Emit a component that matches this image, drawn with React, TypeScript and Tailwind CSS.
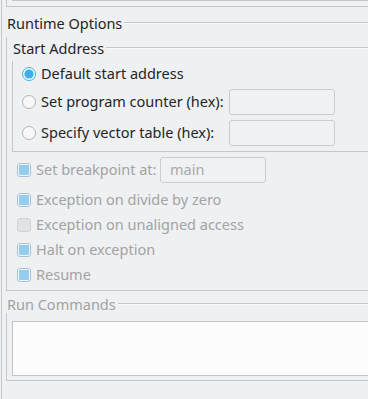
import React from "react";

const LINE = "border-[#c5c6c7]";

function Legend({ title, disabled }: { title: string; disabled?: boolean }) {
  return (
    <div className="flex h-[20px] items-center">
      <span
        className={
          "mt-[2px] pl-px text-[14.5px] leading-none " +
          (disabled ? "text-[#a2a3a5]" : "text-[#232627]")
        }
      >
        {title}
      </span>
      <div className="ml-[2px] mt-[2px] h-[2px] flex-1 border-t border-[#c5c6c7] bg-[#fafafa]" />
    </div>
  );
}

function Radio({ checked }: { checked?: boolean }) {
  return (
    <svg width="14" height="14" viewBox="0 0 14 14" className="shrink-0">
      <circle
        cx="7"
        cy="7"
        r="6.5"
        fill={checked ? "#f4fafd" : "#f7f7f8"}
        stroke={checked ? "#3daee9" : "#b3b4b6"}
        strokeWidth="1"
      />
      {checked && <circle cx="7" cy="7" r="4.6" fill="#3daee9" />}
    </svg>
  );
}

function Check({ checked }: { checked?: boolean }) {
  if (!checked) {
    return (
      <div className="h-[14px] w-[14px] shrink-0 rounded-[3px] border border-[#d2d3d4] bg-[#e1e2e3]" />
    );
  }
  return (
    <div className="h-[14px] w-[14px] shrink-0 rounded-[3px] border border-[#a8c2d4] bg-[#f3f7fa] p-px">
      <div className="h-full w-full rounded-[1px] bg-[#93cdef]" />
    </div>
  );
}

function Field({ value, w }: { value?: string; w: string }) {
  return (
    <div
      className={
        "flex h-[26px] shrink-0 items-center rounded-[3px] border border-[#cbcccd] bg-[#f0f1f2] pl-[9px] text-[14.5px] text-[#a8a9ab] " +
        w
      }
    >
      {value}
    </div>
  );
}

export default function App() {
  const radios = [
    { label: "Default start address", checked: true, input: false, cls: "mt-[4px]" },
    { label: "Set program counter (hex):", checked: false, input: true, cls: "mt-[2px]" },
    { label: "Specify vector table (hex):", checked: false, input: true, cls: "mt-[5px]" },
  ];
  const checks = [
    { label: "Exception on divide by zero", checked: true },
    { label: "Exception on unaligned access", checked: false },
    { label: "Halt on exception", checked: true },
    { label: "Resume", checked: true },
  ];

  return (
    <div
      className="h-[399px] w-[368px] overflow-hidden bg-[#eff0f1] pl-px"
      style={{ fontFamily: '"Noto Sans", "Open Sans", sans-serif' }}
    >
      <div className={"h-full border-l pl-[4px] " + LINE}>
        {/* tail of the group above */}
        <div className={"h-[7px] border-b border-l " + LINE}>
          <div className={"ml-[5px] h-px border-l border-b " + LINE} />
        </div>

        {/* Runtime Options */}
        <div className="mt-[5px]">
          <Legend title="Runtime Options" />
          <div className={"border-b border-l pb-[3px] pl-[5px] " + LINE}>
            {/* Start Address */}
            <div className="mt-[5px]">
              <Legend title="Start Address" />
              <div className={"border-b border-l pb-[5px] pl-[9px] " + LINE}>
                {radios.map((r) => (
                  <div key={r.label} className={"flex h-[26px] items-center " + r.cls}>
                    <div className="flex w-[207px] items-center gap-[5px]">
                      <Radio checked={r.checked} />
                      <span className="whitespace-nowrap text-[14.5px] text-[#232627]">
                        {r.label}
                      </span>
                    </div>
                    {r.input && <Field w="w-[106px]" />}
                  </div>
                ))}
              </div>
            </div>

            <div className="mt-[5px] pl-[5px]">
              <div className="flex h-[26px] items-center">
                <div className="flex w-[143px] items-center gap-[5px]">
                  <Check checked />
                  <span className="whitespace-nowrap text-[14.5px] text-[#a2a3a5]">
                    Set breakpoint at:
                  </span>
                </div>
                <Field value="main" w="w-[106px]" />
              </div>
              <div className="mt-[4px]">
                {checks.map((c) => (
                  <div key={c.label} className="flex h-[25px] items-center gap-[5px]">
                    <Check checked={c.checked} />
                    <span className="whitespace-nowrap text-[14.5px] text-[#a2a3a5]">
                      {c.label}
                    </span>
                  </div>
                ))}
              </div>
            </div>
          </div>
        </div>

        {/* Run Commands */}
        <div className="mt-[2px]">
          <Legend title="Run Commands" disabled />
          <div className={"border-b border-l pb-[4px] pl-[5px] pt-[8px] " + LINE}>
            <div className="h-[55px] border border-r-0 border-[#c2c3c4] bg-[#fcfcfc]" />
          </div>
        </div>
      </div>
    </div>
  );
}
